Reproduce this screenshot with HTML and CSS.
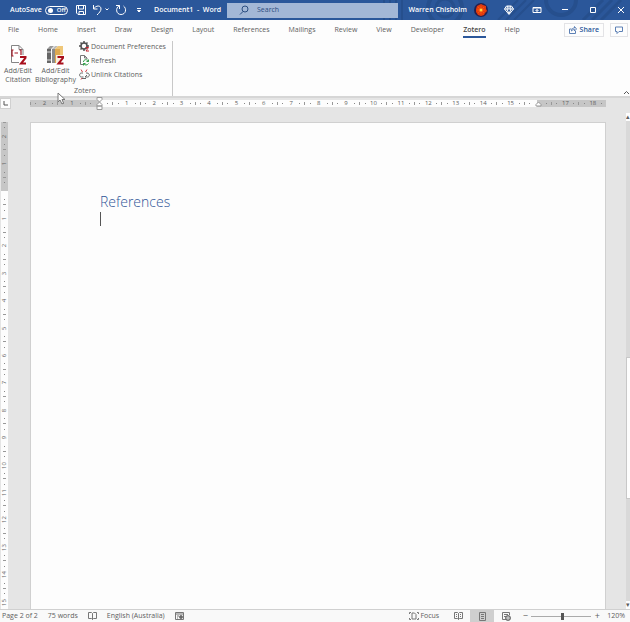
FILE: index.html
```html
<!DOCTYPE html>
<html lang="en">

<head>
    <meta charset="UTF-8">
    <meta name="viewport" content="width=device-width, initial-scale=1.0">
    <title>Document1 - Word</title>
    <link rel="stylesheet" href="styles.css">
</head>

<body>
    <header class="titlebar">
        <svg class="pattern" width="260" height="20" viewBox="0 0 260 20" fill="none" stroke="#224a87" aria-hidden="true">
            <path d="M14 0v20M20 0v20M26 0v20M32 0v20" stroke-width="2" />
            <circle cx="75" cy="8" r="17" stroke-width="4" />
            <circle cx="75" cy="8" r="9" stroke-width="3" />
            <path d="M128 20L148 0M136 20L156 0M144 20L164 0" stroke-width="2" />
            <circle cx="191" cy="0" r="15" stroke-width="4" />
            <path d="M213 20L233 0M222 20L242 0M231 20L251 0" stroke-width="3" />
        </svg>
        <label class="autosave">AutoSave
            <input type="checkbox" class="toggle">
            <span class="switch"><i></i>Off</span>
        </label>
        <div class="quick">
            <button aria-label="Save"><svg width="12" height="12" viewBox="0 0 12 12"><path d="M1.500 1.500h9v9h-7.500L1.500 9zM3.500 1.500v3.500h5V1.500M4 10.500V7.500h4.500v3" /></svg></button>
            <button class="undo" aria-label="Undo"><svg width="18" height="12" viewBox="0 0 18 12"><path d="M1.500 1v4h4M1.500 5C4 1 9 1 9 5c0 2-2 4-4 6M13.500 4.500l1.500 1.500L16.500 4.500" /></svg></button>
            <button aria-label="Repeat"><svg width="12" height="12" viewBox="0 0 12 12"><path d="M1 1.500h3.500V5M4.500 1.500C0 4 1 10.500 6 10.500c5 0 6-6 2.500-8.500" /></svg></button>
            <button class="more" aria-label="Customize toolbar"><svg width="6" height="6" viewBox="0 0 6 6"><path d="M1 1.500h4M1.500 3.500L3 5l1.500-1.500z" /></svg></button>
        </div>
        <span class="doc-title">Document1&nbsp; -&nbsp; Word</span>
        <label class="search">
            <svg width="10" height="10" viewBox="0 0 10 10"><circle cx="6" cy="4" r="3" /><path d="M4 6.500L1 9.500" /></svg>
            <input type="text" placeholder="Search" aria-label="Search">
        </label>
        <span class="user">Warren Chisholm</span>
        <div class="window-tools">
            <button aria-label="Account"><svg width="14" height="14" viewBox="0 0 14 14"><circle cx="7" cy="7" r="7" fill="#27204d" stroke="none" /><path d="M7 1l2 1 3 1v3l1 2-2 2-1 2-3 1-3-1-2-3V6l1-3 2-1z" fill="#e33b0c" stroke="none" /><path d="M7 3v8M3 7h8M4 4l6 6M10 4l-6 6" stroke="#f5540f" /><circle cx="7" cy="7" r="1.500" fill="#ffd83d" stroke="none" /></svg></button>
            <button aria-label="Premium"><svg width="10" height="10" viewBox="0 0 10 10"><path d="M2.500 1h5L9.500 4 5 9.500.5 4zM.5 4h9M3.500 1L3 4l2 5 2-5-.5-3M5 1v3" /></svg></button>
            <button aria-label="Ribbon display"><svg width="10" height="8" viewBox="0 0 10 8"><path d="M1 1.500h8v5H1zM1 2h8M5 6V3.500M3.500 5L5 3.500 6.500 5" /></svg></button>
            <button aria-label="Minimize"><svg width="8" height="8" viewBox="0 0 8 8"><path d="M1 3.500h6" /></svg></button>
            <button aria-label="Maximize"><svg width="8" height="8" viewBox="0 0 8 8"><path d="M1.500 1.500h5v5h-5z" /></svg></button>
            <button class="close" aria-label="Close"><svg width="8" height="8" viewBox="0 0 8 8"><path d="M1 1l6 6M7 1L1 7" /></svg></button>
        </div>
    </header>

    <nav class="tabs">
        <a href="#">File</a>
        <a href="#">Home</a>
        <a href="#">Insert</a>
        <a href="#">Draw</a>
        <a href="#">Design</a>
        <a href="#">Layout</a>
        <a href="#">References</a>
        <a href="#">Mailings</a>
        <a href="#">Review</a>
        <a href="#">View</a>
        <a href="#">Developer</a>
        <a href="#" class="active">Zotero</a>
        <a href="#">Help</a>
        <div class="tab-actions">
            <button><svg width="8" height="8" viewBox="0 0 8 8"><path d="M2.500 3H.5v4.500h6V5M2.500 5c0-2 1-3 3-3V.5L7.500 3 5.500 5V3.500c-1.500 0-2 .5-3 1.500z" /></svg>Share</button>
            <button aria-label="Comments"><svg width="8" height="8" viewBox="0 0 8 8"><path d="M.5 1h7v4.500H4L2 7.500v-2H.5z" /></svg></button>
        </div>
    </nav>

    <section class="ribbon">
        <div class="group">
            <div class="group-tools">
                <button class="big">
                    <svg width="20" height="22" viewBox="0 0 20 22"><path d="M3.500 1.500H11l4 4v13H3.500z" fill="#fff" stroke="#858585" /><path d="M11 1.500v4h4" fill="none" stroke="#858585" /><path d="M5.500 6H4v6h1.500M11.500 6H13v6h-1.500M6.500 9H10" fill="none" stroke="#a01522" stroke-width="1.200" /><path d="M11 11h8v11h-8z" fill="#fff" /><path d="M12 13h5.500v1L13 19.500h5" fill="none" stroke="#a80f1c" stroke-width="2" /></svg>
                    Add/Edit<br>Citation
                </button>
                <button class="big">
                    <svg width="22" height="22" viewBox="0 0 22 22"><path d="M3 5l3-3h4L7 5v14H3z" fill="#999" /><path d="M3 5h4v14H3z" fill="#666" /><path d="M3 8h4M3 16h4" stroke="#ddd" /><path d="M8 5l3-3h3l-3 3v14H8z" fill="#bbb" /><path d="M8 5h3v14H8z" fill="#8b8b8b" /><path d="M11 5l3-3h5v14l-3 3h-5z" fill="#efc779" /><path d="M11 5h5v14h-5z" fill="#dfaa50" /><path d="M12 11h9v11h-9z" fill="#fff" opacity=".8" /><path d="M13.500 13H19v1L14.500 19.500h5" fill="none" stroke="#a80f1c" stroke-width="2" /></svg>
                    Add/Edit<br>Bibliography
                </button>
                <div class="small-tools">
                    <button><svg width="11" height="11" viewBox="0 0 11 11"><circle cx="5" cy="5" r="3" fill="none" stroke="#505050" stroke-width="1.500" /><path d="M5 0v2M5 8v2M0 5h2M8 5h2M1.500 1.500L3 3M7 3l1.500-1.500M1.500 8.500L3 7" stroke="#505050" stroke-width="1.500" /><path d="M6.500 6.500h3L7 10h3" fill="none" stroke="#c3202c" /></svg>Document Preferences</button>
                    <button><svg width="11" height="11" viewBox="0 0 11 11"><path d="M5 9.500H1.500v-9h4L8 3v1M5.500.5V3H8" fill="#fff" stroke="#777" /><path d="M4.500 7c0-3 4-3 5-.5M9.500 4.500v2h-2M9.500 8.500c-1 2-4 2-5 0M4.500 10.500v-2h2" fill="none" stroke="#319a46" /></svg>Refresh</button>
                    <button><svg width="11" height="11" viewBox="0 0 11 11"><path d="M4 4H2.500C0 4 0 8 2.500 8H4.500M3 9.500h4M7 4h1C11 4 11 8 8.500 8H6L8 6" fill="none" stroke="#666" /><path d="M2 .5l1.500 2.500M8 .5L6.500 3M2 10.500L3 9" stroke="#d33b43" /></svg>Unlink Citations</button>
                </div>
            </div>
            <div class="group-name">Zotero</div>
        </div>
        <button class="collapse" aria-label="Collapse ribbon"><svg width="7" height="5" viewBox="0 0 7 5"><path d="M1 4l2.500-2.500L6 4" /></svg></button>
        <svg class="pointer" width="9" height="13" viewBox="0 0 9 13"><path d="M1 1v9l2-2 2 4 1.500-1L5 7.500h3z" fill="#fff" stroke="#777" /></svg>
    </section>

    <div class="ruler-row">
        <button class="tab-stop" aria-label="Tab stop"><svg width="5" height="5" viewBox="0 0 5 5"><path d="M1 0v4h4" /></svg></button>
        <div class="ruler" id="hRuler"></div>
    </div>

    <main class="workspace">
        <div class="vruler"><div class="vruler-cells" id="vRuler"></div></div>
        <article class="page">
            <h1>References</h1>
            <div class="caret"></div>
        </article>
        <div class="scrollbar">
            <span class="arrow">▴</span>
            <span class="track-top"></span>
            <span class="thumb"></span>
            <span class="track-bottom"></span>
            <span class="arrow">▾</span>
        </div>
    </main>

    <footer class="status">
        <span>Page 2 of 2</span>
        <span>75 words</span>
        <svg width="9" height="8" viewBox="0 0 9 8"><path d="M4.500 1.500L3.500.5h-3v6h3l1 1 1-1h3v-6h-3zv6" /></svg>
        <span>English (Australia)</span>
        <svg width="9" height="8" viewBox="0 0 9 8"><path d="M.5.5h8v7h-8zM.5 2h8M2 4h2M2 6h1" /><circle cx="6" cy="5" r="1.500" fill="#666" /></svg>
        <div class="views">
            <button class="focus"><svg width="10" height="8" viewBox="0 0 10 8"><path d="M2 .5H.5V2M.5 6v1.500H2M8 .5h1.500V2M9.500 6v1.500H8M3 1h2.500L7 2.500V7H3z" /></svg>Focus</button>
            <button aria-label="Read mode"><svg width="9" height="8" viewBox="0 0 9 8"><path d="M4.500 1.500L3.500.5h-3v6h3l1 1 1-1h3v-6h-3zv6M2 2.500h1M2 4.500h1M6 2.500h1M6 4.500h1" /></svg></button>
            <button class="selected" aria-label="Print layout"><svg width="9" height="9" viewBox="0 0 9 9"><path d="M1.500.5h6v8h-6zM3 2.500h3M3 4.500h3M3 6.500h3" /></svg></button>
            <button aria-label="Web layout"><svg width="9" height="9" viewBox="0 0 9 9"><path d="M4 7.500H.5v-7h7V3M2 2.500h4M2 4.500h2" /><circle cx="6" cy="6" r="2.500" fill="#666" /><path d="M4 6h4M6 4v4" stroke="#ddd" /></svg></button>
        </div>
        <div class="zoom">
            <button aria-label="Zoom out">−</button>
            <input type="range" min="10" max="230" value="125" aria-label="Zoom">
            <button aria-label="Zoom in">+</button>
        </div>
        <span class="percent">120%</span>
    </footer>

    <script>
        // each cell is one centimetre, centred on its number
        function fillRuler(id, from, to, blanks) {
            let html = '';
            for (let i = from; i <= to; i++) {
                let label = blanks.includes(i) ? '' : Math.abs(i);
                html += '<div class="cell"><i></i><b></b><span>' + label + '</span><b></b></div>';
            }
            document.getElementById(id).insertAdjacentHTML('afterbegin', html);
        }

        fillRuler('hRuler', -2, 18, [0, 16]);
        fillRuler('vRuler', -2, 15, [0]);

        const hCells = document.querySelectorAll('#hRuler .cell');
        hCells[2].insertAdjacentHTML('beforeend', '<svg class="indent" width="7" height="13" viewBox="0 0 7 13"><path d="M1 .5h5v2L3.500 5 6 7.500V9H1V7.500L3.500 5 1 2.500zM1 9h5v3.500H1z"/></svg>');
        hCells[18].insertAdjacentHTML('beforeend', '<svg class="indent" width="7" height="13" viewBox="0 0 7 13"><path d="M3.500 5L6 7.500V9H1V7.500z"/></svg>');
    </script>
</body>

</html>
```

FILE: styles.css
```css
* {
    box-sizing: border-box;
}

body {
    margin: 0;
    height: 100vh;
    display: flex;
    flex-direction: column;
    overflow: hidden;
    font-family: "Open Sans", "Noto Sans", sans-serif;
    font-size: 7px;
    line-height: 10px;
    color: #606060;
    background: #e5e5e5;
}

button,
input {
    font: inherit;
    color: inherit;
    background: none;
    border: none;
    padding: 0;
    margin: 0;
}

button {
    display: flex;
    align-items: center;
    justify-content: center;
    white-space: nowrap;
}

a {
    color: inherit;
    text-decoration: none;
}

svg {
    display: block;
    flex: none;
}

/* title bar */
.titlebar {
    position: relative;
    display: flex;
    align-items: center;
    height: 20px;
    flex: none;
    padding-left: 10px;
    background: #2b579a;
    color: #fff;
    font-weight: 600;
    white-space: nowrap;
}

.titlebar > * {
    position: relative;
}

.titlebar svg {
    fill: none;
    stroke: #fff;
}

.titlebar .pattern {
    position: absolute;
    right: 0;
    top: 0;
    stroke: #264f8d;
}

.autosave {
    display: flex;
    align-items: center;
    gap: 3px;
    width: 65px;
}

.toggle {
    position: absolute;
    opacity: 0;
}

.switch {
    display: flex;
    align-items: center;
    gap: 4px;
    width: 23px;
    height: 9px;
    padding-left: 2px;
    border: 1px solid #fff;
    border-radius: 5px;
    font-size: 6px;
    line-height: 7px;
}

.switch i {
    width: 5px;
    height: 5px;
    border-radius: 50%;
    background: #fff;
}

.quick {
    display: flex;
    align-items: center;
    gap: 5px;
    width: 79px;
}

.quick .more {
    margin-left: 4px;
}

.doc-title {
    width: 73px;
}

.search {
    display: flex;
    align-items: center;
    gap: 8px;
    flex: 0 1 171px;
    height: 15px;
    padding-left: 12px;
    background: #a3b7d6;
    color: #2b4d80;
}

.search svg {
    stroke: #2b4d80;
}

.search input {
    width: 100%;
    min-width: 0;
    font-weight: 400;
}

.search input::placeholder {
    color: #2b4d80;
}

.user {
    margin-left: auto;
}

.window-tools {
    display: flex;
}

.window-tools button {
    width: 28px;
    height: 20px;
}

.window-tools .close {
    width: 23px;
    padding-left: 5px;
}

/* tabs */
.tabs {
    display: flex;
    align-items: center;
    gap: 19px;
    height: 19px;
    flex: none;
    padding: 0 2px 0 8px;
    background: #fdfdfd;
}

.tabs a {
    height: 17px;
    line-height: 17px;
}

.tabs .active {
    border-bottom: 2px solid #2b579a;
    font-weight: 600;
    color: #444;
}

.tab-actions {
    display: flex;
    gap: 6px;
    margin-left: auto;
}

.tab-actions button {
    gap: 3px;
    height: 14px;
    padding: 0 4px;
    border: 1px solid #e3e3e6;
    color: #2b579a;
    font-weight: 600;
}

.tab-actions svg {
    fill: none;
    stroke: #5d80b5;
}

/* ribbon */
.ribbon {
    position: relative;
    display: flex;
    justify-content: space-between;
    align-items: flex-end;
    height: 57px;
    flex: none;
    background: #fdfdfd;
}

.group {
    height: 55px;
    padding: 0 6px 0 4px;
    border-right: 1px solid #c8c8c8;
}

.group-tools {
    display: flex;
    gap: 3px;
    height: 45px;
}

.big {
    display: block;
    text-align: center;
    line-height: 9px;
}

.big svg {
    margin: 0 auto;
}

.small-tools {
    display: flex;
    flex-direction: column;
    gap: 3px;
    align-items: flex-start;
}

.small-tools button {
    gap: 1px;
    height: 11px;
}

.group-name {
    text-align: center;
    line-height: 10px;
}

.collapse {
    height: 8px;
}

.collapse svg {
    fill: none;
    stroke: #555;
}

.pointer {
    position: absolute;
    z-index: 2;
    left: 57px;
    top: 53px;
}

/* rulers */
.ruler-row {
    display: flex;
    align-items: flex-start;
    height: 26px;
    flex: none;
    padding-right: 24px;
    border-top: 2px solid #d6d6d6;
    font-size: 6px;
}

.tab-stop {
    width: 11px;
    height: 11px;
    margin-right: 19px;
    border: 1px solid #d0d0d0;
    background: #fdfdfd;
}

.tab-stop svg {
    fill: none;
    stroke: #555;
}

.ruler {
    display: flex;
    flex: 1;
    height: 7px;
    margin-top: 2px;
    background: linear-gradient(to right, #c6c6c6 12%, #fdfdfd 12%, #fdfdfd 88%, #c6c6c6 88%);
}

.cell {
    position: relative;
    display: flex;
    flex: 1;
    align-items: center;
    justify-content: space-between;
    min-width: 0;
    min-height: 0;
}

.cell i {
    width: 1px;
    height: 3px;
    background: #999;
}

.cell b {
    width: 1px;
    height: 1px;
    background: #888;
}

.cell span {
    width: 7px;
    text-align: center;
    line-height: 7px;
    display: flex;
    justify-content: center;
}

.cell b:last-of-type {
    margin-right: 4px;
}

.indent {
    position: absolute;
    left: 11px;
    top: -3px;
    z-index: 1;
    fill: #fdfdfd;
    stroke: #999;
}

.vruler {
    width: 7px;
    margin-left: 1px;
    overflow: hidden;
}

.vruler-cells {
    display: flex;
    flex-direction: column;
    height: calc(100% + 6px);
    background: linear-gradient(to bottom, #c6c6c6 14%, #fdfdfd 14%);
    font-size: 6px;
}

.vruler .cell {
    flex-direction: column;
}

.vruler .cell i {
    width: 3px;
    height: 1px;
}

.vruler .cell b:last-of-type {
    margin: 0 0 4px;
}

.vruler .cell span {
    width: 7px;
    height: 7px;
    align-items: center;
    transform: rotate(-90deg);
}

/* document */
.workspace {
    display: flex;
    flex: 1;
    min-height: 0;
}

.page {
    flex: 1;
    margin: 0 20px 0 22px;
    padding: 69px;
    border: 1px solid #d0d0d0;
    border-bottom: none;
    background: #fdfdfd;
}

.page h1 {
    margin: 0;
    font-size: 14px;
    line-height: 20px;
    font-weight: 300;
    color: #2f5496;
}

.caret {
    width: 1px;
    height: 14px;
    background: #555;
}

.scrollbar {
    display: flex;
    flex-direction: column;
    width: 4px;
    margin-top: -9px;
    overflow: hidden;
    background: #d9d9d9;
}

.scrollbar .arrow {
    height: 8px;
    line-height: 8px;
    background: #fdfdfd;
}

.track-top {
    flex: 238;
}

.thumb {
    flex: 141;
    background: #fdfdfd;
    border: 1px solid #c8c8c8;
    border-right: none;
}

.track-bottom {
    flex: 103;
}

/* status bar */
.status {
    display: flex;
    align-items: center;
    height: 13px;
    flex: none;
    padding: 0 5px 0 2px;
    gap: 10px;
    border-top: 1px solid #d0d0d0;
    background: #f9f9f9;
    white-space: nowrap;
}

.status svg {
    fill: none;
    stroke: #777;
}

.views {
    display: flex;
    margin-left: auto;
}

.views button {
    width: 24px;
    height: 12px;
}

.views .focus {
    width: auto;
    gap: 1px;
    margin-right: 7px;
}

.views .selected {
    background: #cfcfcf;
}

.zoom {
    display: flex;
    align-items: center;
    gap: 3px;
    margin-left: -6px;
}

.zoom button {
    width: 6px;
    height: 12px;
    font-size: 9px;
}

.zoom input {
    appearance: none;
    width: 60px;
    height: 12px;
    background: linear-gradient(#aaa, #aaa) center / 100% 1px no-repeat;
}

.zoom input::-webkit-slider-thumb {
    appearance: none;
    width: 3px;
    height: 7px;
    background: #555;
}

.percent {
    margin-left: -3px;
}
```
